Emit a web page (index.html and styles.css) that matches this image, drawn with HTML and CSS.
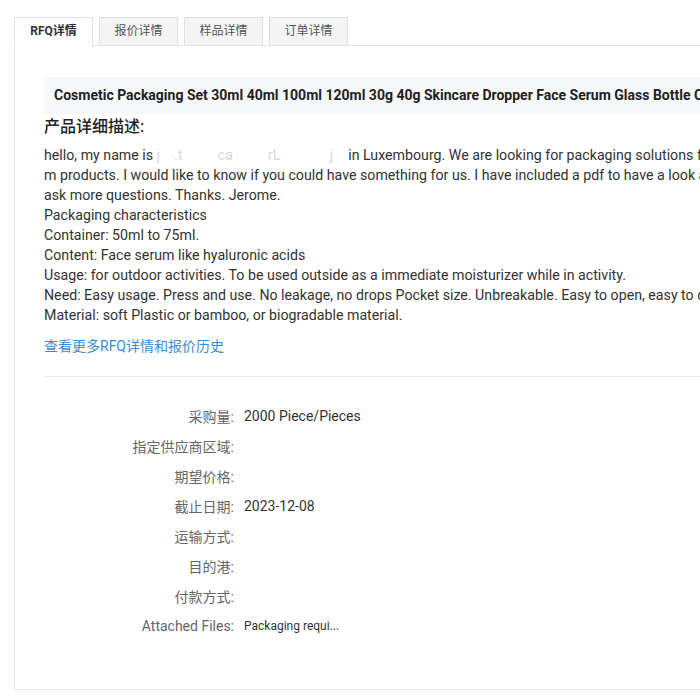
FILE: index.html
```html
<!DOCTYPE html>
<html lang="zh-CN">
<head>
    <meta charset="UTF-8">
    <meta name="viewport" content="width=device-width, initial-scale=1.0">
    <title>RFQ详情</title>
    <link rel="stylesheet" href="styles.css">
</head>
<body>
    <div class="tabs">
        <div class="tab active">RFQ详情</div>
        <div class="tab">报价详情</div>
        <div class="tab">样品详情</div>
        <div class="tab">订单详情</div>
    </div>

    <div class="panel">
        <div class="product-title">Cosmetic Packaging Set 30ml 40ml 100ml 120ml 30g 40g Skincare Dropper Face Serum Glass Bottle Container With Box</div>
        <h3 class="desc-title">产品详细描述:</h3>
        <div class="desc">
            <p>hello, my name is <span class="masked">j&nbsp;&nbsp;&nbsp;&nbsp;.t&nbsp;&nbsp;&nbsp;&nbsp;&nbsp;&nbsp;&nbsp;&nbsp;&nbsp;&nbsp;ca&nbsp;&nbsp;&nbsp;&nbsp;&nbsp;&nbsp;&nbsp;&nbsp;&nbsp;&nbsp;rL&nbsp;&nbsp;&nbsp;&nbsp;&nbsp;&nbsp;&nbsp;&nbsp;&nbsp;&nbsp;&nbsp;&nbsp;&nbsp;&nbsp;j</span> in Luxembourg. We are looking for packaging solutions for our premiu</p>
            <p>m products. I would like to know if you could have something for us. I have included a pdf to have a look and you can</p>
            <p>ask more questions. Thanks. Jerome.</p>
            <p>Packaging characteristics</p>
            <p>Container: 50ml to 75ml.</p>
            <p>Content: Face serum like hyaluronic acids</p>
            <p>Usage: for outdoor activities. To be used outside as a immediate moisturizer while in activity.</p>
            <p>Need: Easy usage. Press and use. No leakage, no drops Pocket size. Unbreakable. Easy to open, easy to close.</p>
            <p>Material: soft Plastic or bamboo, or biogradable material.</p>
        </div>
        <a class="more-link" href="#">查看更多RFQ详情和报价历史</a>

        <div class="info">
            <div class="row"><span class="label">采购量:</span><span class="value">2000 Piece/Pieces</span></div>
            <div class="row"><span class="label">指定供应商区域:</span><span class="value"></span></div>
            <div class="row"><span class="label">期望价格:</span><span class="value"></span></div>
            <div class="row"><span class="label">截止日期:</span><span class="value">2023-12-08</span></div>
            <div class="row"><span class="label">运输方式:</span><span class="value"></span></div>
            <div class="row"><span class="label">目的港:</span><span class="value"></span></div>
            <div class="row"><span class="label">付款方式:</span><span class="value"></span></div>
            <div class="row"><span class="label">Attached Files:</span><span class="value file">Packaging requi...</span></div>
        </div>
    </div>
</body>
</html>
```

FILE: styles.css
```css
html, body {
    overflow: hidden;
}
body {
    margin: 0;
    padding: 17px 0 0 14px;
    width: 1000px;
    font-family: Roboto, "Noto Sans CJK SC", sans-serif;
    color: #333;
    background: #fff;
}
.tabs {
    display: flex;
    gap: 6px;
    position: relative;
    z-index: 1;
}
.tab {
    width: 77px;
    height: 27px;
    line-height: 27px;
    text-align: center;
    font-size: 12px;
    color: #555;
    background: #f4f4f4;
    border: 1px solid #e0e0e0;
    border-bottom: none;
}
.tab.active {
    background: #fff;
    color: #333;
    font-weight: bold;
    height: 28px;
    margin-bottom: -1px;
}
.panel {
    border: 1px solid #e3e8ee;
    height: 612px;
    padding: 31px 0 0 29px;
}
.product-title {
    background: #f7f8fa;
    height: 37px;
    line-height: 37px;
    padding-left: 10px;
    font-size: 14px;
    font-weight: bold;
    color: #222;
    white-space: nowrap;
}
.desc-title {
    margin: 2px 0 7px;
    font-size: 16px;
    line-height: 22px;
    font-weight: 500;
    color: #222;
}
.desc {
    font-size: 14.2px;
    line-height: 20px;
    color: #333;
}
.desc p {
    margin: 0;
    white-space: nowrap;
}
.masked {
    display: inline-block;
    width: 188px;
    color: #d8d8d8;
    white-space: pre;
}
.more-link {
    display: block;
    margin-top: 11px;
    padding-bottom: 20px;
    border-bottom: 1px solid #e6ebf1;
    font-size: 14px;
    line-height: 20px;
    color: #3a8cd6;
    text-decoration: none;
}
.info {
    padding-top: 24px;
}
.row {
    display: flex;
    height: 30px;
    align-items: center;
}
.label {
    width: 190px;
    text-align: right;
    font-size: 14px;
    color: #666;
}
.value {
    margin-left: 10px;
    font-size: 14px;
    color: #333;
}
.value.file {
    font-size: 12px;
}
```
